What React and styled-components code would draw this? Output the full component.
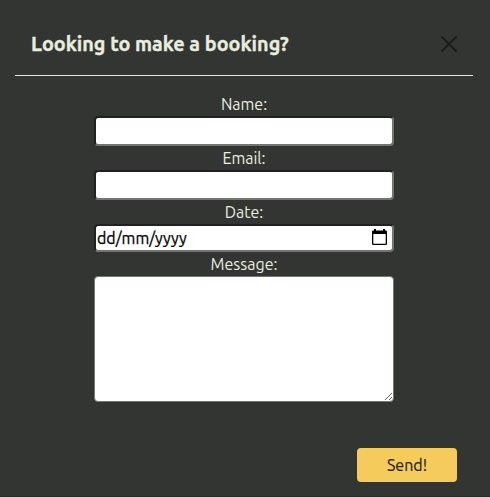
import React from "react";
import styled, { createGlobalStyle } from "styled-components";

const GlobalStyle = createGlobalStyle`
  * { box-sizing: border-box; }
  body { margin: 0; background: #333533; }
  body, input, textarea, button { font-family: Ubuntu, "Noto Sans", sans-serif; }
`;

const Modal = styled.main`
  display: flex;
  flex-direction: column;
  height: 497px;
  padding: 13px 17px 14px 15px;
  background: #333533;
  border-bottom: 1px solid #292a28;
  color: #e8eddf;
`;

const Header = styled.header`
  display: flex;
  align-items: center;
  justify-content: space-between;
  height: 63px;
  padding: 0 16px;
  border-bottom: 1px solid #e4e5e1;
`;

const Title = styled.h1`
  margin: 0;
  font-size: 19.8px;
  line-height: 28px;
  font-weight: 700;
  -webkit-text-stroke: 0.35px currentColor;
  white-space: nowrap;
`;

const CloseButton = styled.button`
  display: flex;
  padding: 0;
  border: 0;
  background: none;
  color: #1b1c1a;
`;

const Form = styled.form`
  display: flex;
  flex: 1;
  flex-direction: column;
  align-items: center;
  padding-top: 16px;
`;

const Label = styled.label`
  height: 24px;
  font-size: 16px;
  line-height: 24px;
`;

const Field = styled.div`
  display: flex;
  align-items: center;
  width: 300px;
  height: ${(p) => p.$height}px;
  padding-right: 5px;
  border: 2px solid;
  border-color: #202120 #737572 #737572 #202120;
  border-radius: 4px;
  background: #fff;
`;

const Input = styled.input`
  flex: 1;
  min-width: 0;
  height: 24px;
  padding: 0 1px;
  border: 0;
  outline: 0;
  background: transparent;
  font-size: 16px;
  &::placeholder {
    color: #000;
    opacity: 1;
    -webkit-text-stroke: 0.25px #000;
  }
`;

const Message = styled.textarea`
  display: block;
  width: 300px;
  height: 126px;
  padding: 2px;
  border: 1px solid #737572;
  border-radius: 4px;
  background: #fff;
  outline: 0;
  font-size: 16px;
`;

const SendButton = styled.button`
  align-self: flex-end;
  width: 100px;
  height: 34px;
  margin: auto 16px 0 0;
  padding: 0;
  border: 0;
  border-radius: 4px;
  background: #f5cb5c;
  color: #242423;
  font-size: 16px;
  line-height: 34px;
  -webkit-text-stroke: 0.15px currentColor;
`;

const CalendarSvg = styled.svg`
  flex: none;
  margin-bottom: 2px;
`;

const CloseIcon = () => (
  <svg width="16" height="16" viewBox="0 0 16 16" fill="none" stroke="currentColor" strokeWidth="1.8" strokeLinecap="round">
    <path d="M1 1l14 14M15 1L1 15" />
  </svg>
);

const CalendarIcon = () => (
  <CalendarSvg width="15" height="16" viewBox="0 0 15 16">
    <path fill="#000" fillRule="evenodd" d="M2 0h2v1.400h7V0h2v1.400h.7A1.300 1.300 0 0 1 15 2.700v12a1.300 1.300 0 0 1-1.300 1.300H1.300A1.300 1.300 0 0 1 0 14.700v-12A1.300 1.300 0 0 1 1.300 1.400H2zM1.300 5v9.700h12.400V5z" />
  </CalendarSvg>
);

export default function App() {
  return (
    <>
      <GlobalStyle />
      <Modal>
        <Header>
          <Title>Looking to make a booking?</Title>
          <CloseButton type="button" aria-label="Close"><CloseIcon /></CloseButton>
        </Header>
        <Form onSubmit={(e) => e.preventDefault()}>
          <Label htmlFor="name">Name:</Label>
          <Field $height={30}><Input id="name" /></Field>
          <Label htmlFor="email">Email:</Label>
          <Field $height={30}><Input id="email" type="email" /></Field>
          <Label htmlFor="date">Date:</Label>
          <Field $height={28}>
            <Input id="date" placeholder="dd/mm/yyyy" />
            <CalendarIcon />
          </Field>
          <Label htmlFor="message">Message:</Label>
          <Message id="message" />
          <SendButton type="submit">Send!</SendButton>
        </Form>
      </Modal>
    </>
  );
}
